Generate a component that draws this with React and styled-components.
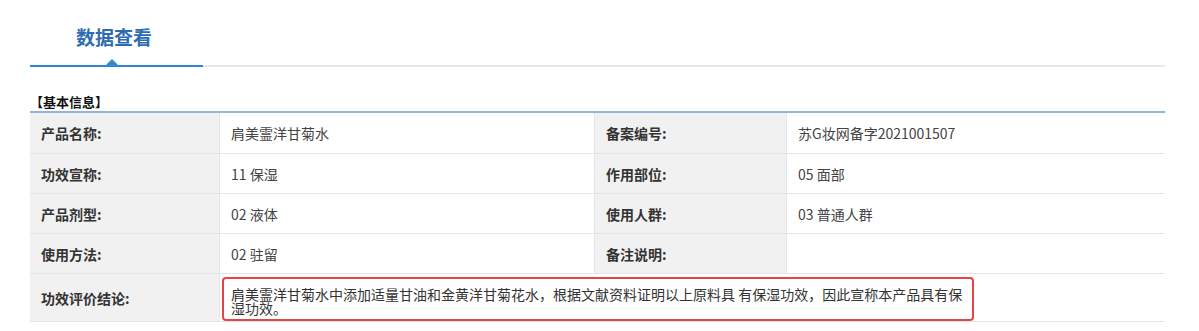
import React from "react";
import styled, { createGlobalStyle } from "styled-components";

const GlobalStyle = createGlobalStyle`
  html, body { margin: 0; padding: 0; background: #ffffff; }
  body { font-family: "Noto Sans CJK SC", "Noto Sans", sans-serif; color: #333; }
`;

const Page = styled.div`
  width: 1135px;
  margin: 0 0 0 30px;
`;

const TabBar = styled.div`
  display: flex;
  border-bottom: 2px solid #e8e8e8;
`;

const Tab = styled.div`
  position: relative;
  width: 173px;
  box-sizing: border-box;
  padding: 25px 0 16px 46px;
  margin-bottom: -2px;
  border-bottom: 2px solid #2f86d2;
  font-size: 19px;
  line-height: 24px;
  font-weight: 700;
  color: #2d6cb2;

  &::after {
    content: "";
    position: absolute;
    left: 76px;
    bottom: 0;
    width: 0;
    height: 0;
    border-left: 6px solid transparent;
    border-right: 6px solid transparent;
    border-bottom: 6px solid #2f86d2;
  }
`;

const SectionTitle = styled.div`
  margin-top: 26px;
  width: 1135px;
  font-size: 13px;
  line-height: 18px;
  font-weight: 700;
  color: #111;
  border-bottom: 2px solid #94b3de;
`;

const Grid = styled.div`
  display: grid;
  width: 1134px;
  grid-template-columns: 189px 375px 192px 378px;
  grid-template-rows: 41px 40px 40px 40px 48px;
  border-right: 1px solid #e4e4e4;
  box-sizing: border-box;
`;

const Cell = styled.div`
  display: flex;
  align-items: center;
  box-sizing: border-box;
  padding: ${(p) => (p.$tight ? "3px 2px 1px 2px" : "0 11px")};
  border-bottom: 1px solid #e4e4e4;
  border-left: ${(p) => (p.$first ? "none" : "1px solid #e6e6e6")};
  background: ${(p) => (p.$label ? "#f1f1f1" : "#ffffff")};
  font-size: 14px;
  line-height: 20px;
  font-weight: ${(p) => (p.$label ? 700 : 400)};
  color: ${(p) => (p.$label ? "#333" : "#444")};
  grid-column: ${(p) => (p.$span ? `span ${p.$span}` : "auto")};
  white-space: nowrap;
`;

const Highlight = styled.div`
  width: 752px;
  height: 44px;
  box-sizing: border-box;
  align-self: flex-start;
  border: 2px solid #e84343;
  border-radius: 4px;
  padding: 8px 3px 0 7px;
  font-size: 14px;
  line-height: 14px;
  color: #333;
  white-space: normal;
  word-break: break-all;
`;

const rows = [
  ["产品名称:", "肩美霊洋甘菊水", "备案编号:", "苏G妆网备字2021001507"],
  ["功效宣称:", "11 保湿", "作用部位:", "05 面部"],
  ["产品剂型:", "02 液体", "使用人群:", "03 普通人群"],
  ["使用方法:", "02 驻留", "备注说明:", ""],
];

export default function App() {
  return (
    <>
      <GlobalStyle />
      <Page>
        <TabBar>
          <Tab>数据查看</Tab>
        </TabBar>
        <SectionTitle>【基本信息】</SectionTitle>
        <Grid>
          {rows.map((r, i) => (
            <React.Fragment key={i}>
              <Cell $label $first>{r[0]}</Cell>
              <Cell>{r[1]}</Cell>
              <Cell $label>{r[2]}</Cell>
              <Cell>{r[3]}</Cell>
            </React.Fragment>
          ))}
          <Cell $label $first>功效评价结论:</Cell>
          <Cell $span={3} $tight>
            <Highlight>
              肩美霊洋甘菊水中添加适量甘油和金黄洋甘菊花水，根据文献资料证明以上原料具 有保湿功效，因此宣称本产品具有保湿功效。
            </Highlight>
          </Cell>
        </Grid>
      </Page>
    </>
  );
}
